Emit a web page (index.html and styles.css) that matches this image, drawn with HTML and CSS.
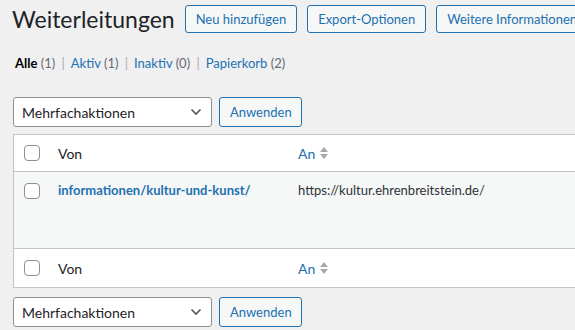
FILE: index.html
```html
<!DOCTYPE html>
<html lang="de">
<head>
    <meta charset="UTF-8">
    <title>Weiterleitungen</title>
    <link rel="stylesheet" href="styles.css">
</head>
<body>
    <div class="wrap">
        <div class="page-head">
            <h1>Weiterleitungen</h1>
            <a class="page-action">Neu hinzufügen</a>
            <a class="page-action">Export-Optionen</a>
            <a class="page-action">Weitere Informationen</a>
        </div>

        <ul class="subsubsub">
            <li><span class="current">Alle</span> <span class="count">(1)</span> <span class="sep">|</span></li>
            <li><a>Aktiv</a> <span class="count">(1)</span> <span class="sep">|</span></li>
            <li><a>Inaktiv</a> <span class="count">(0)</span> <span class="sep">|</span></li>
            <li><a>Papierkorb</a> <span class="count">(2)</span></li>
        </ul>

        <div class="tablenav">
            <div class="select">Mehrfachaktionen
                <svg width="12" height="8" viewBox="0 0 12 8"><path d="M1.5 1.5 L6 6 L10.5 1.5" fill="none" stroke="#50575e" stroke-width="1.6"/></svg>
            </div>
            <button class="button">Anwenden</button>
        </div>

        <table class="list-table">
            <thead>
                <tr>
                    <td class="check"><span class="checkbox"></span></td>
                    <th class="col-from">Von</th>
                    <th class="col-to"><a>An</a> <span class="sort"></span></th>
                </tr>
            </thead>
            <tbody>
                <tr>
                    <td class="check"><span class="checkbox"></span></td>
                    <td class="col-from"><a class="row-title">informationen/kultur-und-kunst/</a></td>
                    <td class="col-to">https://kultur.ehrenbreitstein.de/</td>
                </tr>
            </tbody>
            <tfoot>
                <tr>
                    <td class="check"><span class="checkbox"></span></td>
                    <th class="col-from">Von</th>
                    <th class="col-to"><a>An</a> <span class="sort"></span></th>
                </tr>
            </tfoot>
        </table>

        <div class="tablenav">
            <div class="select">Mehrfachaktionen
                <svg width="12" height="8" viewBox="0 0 12 8"><path d="M1.5 1.5 L6 6 L10.5 1.5" fill="none" stroke="#50575e" stroke-width="1.6"/></svg>
            </div>
            <button class="button">Anwenden</button>
        </div>
    </div>
</body>
</html>
```

FILE: styles.css
```css
body {
    margin: 0;
    background-color: #f0f0f1;
    color: #1d2327;
    font-family: Lato, "Open Sans", sans-serif;
    font-size: 13px;
    overflow: hidden;
}
a {
    color: #2271b1;
    text-decoration: none;
}
.wrap {
    padding-left: 13px;
    width: 620px;
}
.page-head {
    display: flex;
    align-items: center;
    gap: 10px;
    padding-top: 5px;
    white-space: nowrap;
}
.page-head h1 {
    margin: 0 0 0 -1px;
    font-size: 23px;
    font-weight: 400;
    line-height: 28px;
}
.page-action {
    padding: 0 10px;
    line-height: 26px;
    border: 1px solid #2271b1;
    border-radius: 3px;
    background: #f6f7f7;
}
.subsubsub {
    list-style: none;
    margin: 0;
    padding: 20px 0 0 2px;
    display: flex;
    gap: 6px;
    line-height: 20px;
    color: #646970;
}
.subsubsub .current {
    color: #000;
    font-weight: 700;
}
.subsubsub .sep {
    color: #a7aaad;
    margin-left: 3px;
}
.tablenav {
    display: flex;
    gap: 7px;
    margin-top: 24px;
    height: 30px;
}
.tablenav:last-child {
    margin-top: 9px;
}
.select {
    width: 199px;
    box-sizing: border-box;
    border: 1px solid #8c8f94;
    border-radius: 3px;
    background: #fff;
    padding: 0 9px 0 8px;
    font-size: 14px;
    display: flex;
    align-items: center;
    justify-content: space-between;
}
.button {
    font-family: inherit;
    font-size: 13px;
    color: #2271b1;
    border: 1px solid #2271b1;
    border-radius: 3px;
    background: #f6f7f7;
    padding: 0 10px;
    width: 83px;
}
.list-table {
    margin-top: 7px;
    width: 600px;
    border-collapse: collapse;
    border: 1px solid #c3c4c7;
    background: #fff;
}
.list-table th {
    font-weight: 400;
    text-align: left;
}
.list-table thead tr {
    height: 37px;
    border-bottom: 1px solid #c3c4c7;
}
.list-table tfoot tr {
    height: 39px;
    border-top: 1px solid #c3c4c7;
}
.list-table thead th, .list-table tfoot th {
    font-size: 14px;
}
.list-table tbody tr {
    height: 77px;
    background: #f6f7f7;
}
.list-table tbody td {
    vertical-align: top;
    padding-top: 10px;
}
.list-table td, .list-table th {
    padding-left: 0;
}
.check {
    width: 33px;
    padding-left: 10px !important;
}
.list-table tbody .check {
    padding-top: 11px;
}
.checkbox {
    display: block;
    width: 14px;
    height: 14px;
    border: 1px solid #8c8f94;
    border-radius: 4px;
    background: #fff;
}
.col-from {
    width: 239px;
}
.row-title {
    font-weight: 700;
    font-size: 13px;
}
.list-table tbody .col-to {
    color: #2c3338;
    font-size: 13px;
}
.sort {
    display: inline-block;
    width: 0;
    height: 0;
    position: relative;
    vertical-align: middle;
    margin-left: 1px;
    border-left: 4px solid transparent;
    border-right: 4px solid transparent;
    border-bottom: 5px solid #a7aaad;
    top: -5px;
}
.sort::after {
    content: "";
    position: absolute;
    left: -4px;
    top: 7px;
    border-left: 4px solid transparent;
    border-right: 4px solid transparent;
    border-top: 5px solid #a7aaad;
}
```
